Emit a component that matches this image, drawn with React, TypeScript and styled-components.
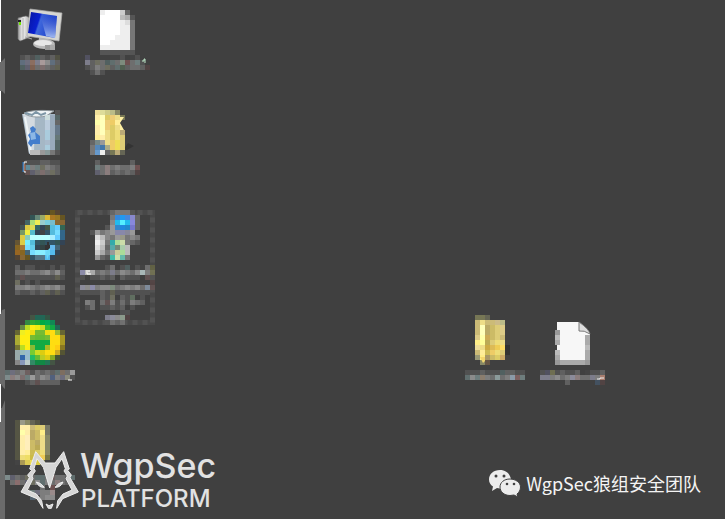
import React from "react";
import styled, { createGlobalStyle } from "styled-components";

const GlobalStyle = createGlobalStyle`
  * { box-sizing: border-box; }
  body { margin: 0; background: #404040; overflow: hidden; }
`;

const Desktop = styled.main`
  position: relative;
  min-height: 100vh;
  overflow: hidden;
  background: #404040;
`;

const IconGrid = styled.section`
  display: grid;
  grid-template-columns: repeat(8, 76px);
  grid-template-rows: repeat(4, 105px) 95px;
  padding-left: 2px;
`;

const DesktopItem = styled.div<{ $column: number; $row: number }>`
  grid-column: ${(p) => p.$column};
  grid-row: ${(p) => p.$row};
`;

const Artwork = styled.svg`
  display: block;
  width: 76px;
  height: 95px;
  overflow: visible;
`;

const WindowEdge = styled.svg`
  position: absolute;
  left: 0;
  top: 0;
  width: 6px;
  height: 519px;
`;

const Brand = styled.div`
  position: absolute;
  left: 20px;
  bottom: 8px;
  display: flex;
  align-items: center;
  color: #e2e2e2;
`;

const Wolf = styled.svg`
  width: 60px;
  height: 60px;
`;

const BrandText = styled.div`
  display: flex;
  flex-direction: column;
  gap: 4px;
  font-family: Inter, sans-serif;
  font-weight: 500;
`;

const BrandName = styled.span`
  font-size: 34px;
  line-height: 34px;
`;

const BrandKind = styled.span`
  padding-left: 1px;
  font-size: 24px;
  line-height: 24px;
`;

const Account = styled.div`
  position: absolute;
  right: 24px;
  bottom: 22px;
  display: flex;
  align-items: center;
  gap: 5px;
  color: #f4f4f4;
  font-family: "Noto Sans CJK SC", sans-serif;
  font-size: 18px;
  line-height: 28px;
  white-space: nowrap;
`;

const ChatIcon = styled.svg`
  width: 33px;
  height: 28px;
`;

const CELL = 5;

type MosaicProps = { x: number; y: number; rows: string[] };

/* Each row lists three-digit hex colours; a dot leaves the cell empty. */
function Mosaic({ x, y, rows }: MosaicProps) {
  return (
    <g shapeRendering="crispEdges">
      {rows.flatMap((row, r) =>
        row.split(" ").map((c, i) =>
          c === "." ? null : (
            <rect key={`${r}-${i}`} x={x + i * CELL} y={y + r * CELL} width={CELL} height={CELL} fill={`#${c}`} />
          )
        )
      )}
    </g>
  );
}

/* Caption mosaics sit slightly dimmed over the desktop. */
function Caption(props: MosaicProps) {
  return (
    <g opacity="0.85">
      <Mosaic {...props} />
    </g>
  );
}

type ItemProps = { column: number; row: number; children: React.ReactNode };

function Item({ column, row, children }: ItemProps) {
  const x = 2 + (column - 1) * 76;
  const y = (row - 1) * 105;
  return (
    <DesktopItem $column={column} $row={row}>
      <Artwork viewBox={`${x} ${y} 76 95`} aria-hidden="true">{children}</Artwork>
    </DesktopItem>
  );
}

function Computer() {
  return (
    <Item column={1} row={1}>
      <defs>
        <linearGradient id="screen" x1="0" x2="1" y1="0" y2="0.3">
          <stop offset="0" stopColor="#0714a0" />
          <stop offset="0.42" stopColor="#0820cf" />
          <stop offset="0.48" stopColor="#3f68dc" />
          <stop offset="1" stopColor="#1a3cc8" />
        </linearGradient>
        <linearGradient id="glare" x1="0" x2="0" y1="0" y2="1">
          <stop offset="0" stopColor="#1839c8" stopOpacity="0.3" />
          <stop offset="1" stopColor="#d4e8ff" stopOpacity="0.75" />
        </linearGradient>
        <linearGradient id="case">
          <stop offset="0" stopColor="#999" />
          <stop offset="0.4" stopColor="#f5f5f5" />
          <stop offset="1" stopColor="#aaa" />
        </linearGradient>
      </defs>
      <path d="M18 18 26 16 30 18 30 37 20 41 18 39Z" fill="url(#case)" stroke="#777" strokeWidth=".6" />
      <path d="M23 18V39M25 37l7 2" stroke="#aaa" />
      <rect x="19" y="22" width="2" height="3" fill="#70e600" />
      <path d="M18 20h3v2h-3Z" fill="#222" />
      <path d="M39 36h9l1 6H39Z" fill="#bbb" />
      <ellipse cx="44" cy="44" rx="11" ry="5" fill="#bbb" />
      <ellipse cx="43" cy="43" rx="9" ry="3" fill="#e8e8e8" />
      <path d="M30 9 62 13 59 41 27 36Z" fill="#d6d6d2" stroke="#aaa" strokeWidth=".7" />
      <path d="M31 12 57 16 55 38 28 33Z" fill="url(#screen)" />
      <path d="M40 14 57 16 55 38 46 36Z" fill="url(#glare)" />
      <Mosaic x={45} y={45} rows={["999 aaa"]} />
      <Caption x={20} y={55} rows={[
        "555 666 555 566 666 555 666 554",
        "678 778 976 889 baa 999 678 666",
        "566 667 865 777 877 777 666 665",
      ]} />
    </Item>
  );
}

function TextFile() {
  return (
    <Item column={2} row={1}>
      <Mosaic x={100} y={10} rows={[
        "eee fff fff fff ccc 666",
        "fff fff fff fff bbb aaa 555",
        "fff fff fff fff eee ddd 777",
        "fff fff fff fff eee eee 777",
        "fff fff fff fff eee eee 777",
        "fff fff fff eee eee eee 777",
        "fff fff eee eee eee eee 777",
        "eee eee eee eee eee eee 777",
        "555 555 555 555 555 555 555",
      ]} />
      <Caption x={85} y={55} rows={[
        "556 . . . . 444 444 555 . 444 555 .",
        "889 666 776 777 566 677 777 898 755 777 788 555",
        "555 666 888 777 776 666 677 565 666 777 777 666 544",
        ". 555 777 555 . . .",
      ]} />
      <path d="M142 61h2v-2h1v4" fill="none" stroke="#bee7c8" />
    </Item>
  );
}

function RecycleBin() {
  return (
    <Item column={1} row={2}>
      <path d="M22 114 60 114 55 154H29Z" fill="#a5b7c5" />
      <path d="M23 114 35 113 34 153H29Z" fill="#d3dae0" />
      <path d="M24 113c7-3 20-3 30-2l-8 5c-9 2-18 1-22-3Z" fill="#eef3f5" stroke="#8f999e" />
      <path d="m25 113 7 2 4-3 5 3 5-2" stroke="#7d96a6" strokeWidth="2" fill="none" />
      <path d="m25 117 4 21 2 15" stroke="#eef4f6" strokeWidth="2" fill="none" />
      <Mosaic x={45} y={110} rows={[
        ". . 555",
        "cdd 9ab 566",
        "bcd 9ab 666",
        "bcd 9ab 678",
        "acd 9ab 678",
        "acd 9ab 677",
        "abc 9ab 566",
        "acd 9ab 566",
        "899 777 555",
      ]} />
      <path d="m30 128 3-2 3 3-1 3 5 4v8h-7l-2 3-3-4 2-4-2-4 3-3Z" fill="#437dcc" />
      <path d="m30 133 5-1 1 7-5 1Z" fill="#8cb7e5" />
      <Mosaic x={30} y={150} rows={["bbb bbb 999"]} />
      <Caption x={25} y={160} rows={[
        "555 555 555 666 666 555 555",
        "69a 888 788 776 888 777 666",
        "655 667 777 877 777 776 666",
      ]} />
      <path d="M27 162h-3v10h2" fill="none" stroke="#fff" />
      <path d="M23 162v10" stroke="#1b72c9" />
      <path d="M25 164v7" stroke="#9c4a24" />
    </Item>
  );
}

function FolderShortcut() {
  return (
    <Item column={2} row={2}>
      <path d="m128 143 6 3-7 4h-4Z" fill="#333" />
      <Mosaic x={90} y={110} rows={[
        ". ed9 dd9 cc8 bb8 886",
        ". fea ffb dc6 ec7 ed8 775",
        ". ffa ffb ec7 ec6 fe9 .",
        ". fea ffb ec7 dc6 ed8 .",
        ". fea ffb ed8 dc6 ed7 ba7",
        ". fe9 fea ed8 dc6 ed7 dc7",
        "666 788 999 ed8 ec6 ed5 dc7",
        "777 58b 47a aa8 ec6 ed5 dc7",
        "777 68b abc dcb 775 ba7 665",
      ]} />
      <path d="M120 117h4l-4 6 4 7h-4Z" fill="#fff0a4" />
      <Mosaic x={95} y={150} rows={["69c eee 666"]} />
      <Caption x={95} y={160} rows={[
        "666 . . . . . . 666 .",
        "788 777 988 777 888 777 777 888 755",
        "667 777 988 666 777 666 777 666 544",
      ]} />
    </Item>
  );
}

function Browser() {
  return (
    <Item column={1} row={3}>
      <Mosaic x={15} y={210} rows={[
        ". . . . . . 443 652 543 .",
        ". . . 355 687 9a6 db3 a72 972 652",
        ". . 466 ad7 ee5 9cc 7cd 7bc 863 863",
        ". 455 dc4 dd5 366 345 454 5bd 6cf 365",
        ". 796 ee4 5bc 345 444 356 5bd 7df 368",
        ". dc4 8cb bff bff bff bff aef 6cf 368",
        "653 dc4 7ef 5bd 356 355 356 356 355 345",
        "862 a73 7df 6ce 345 344 333 6be 467 .",
        "962 862 467 7df 8ef 8ef 7df 5be 345 .",
        "543 863 652 356 578 578 5be 345 . .",
      ]} />
      <path d="M48 242v5" stroke="#333" strokeWidth="2" />
      <path d="m50 248-4 4 1 8 3-8Z" fill="#6cd9f5" />
      <Caption x={15} y={265} rows={[
        "666 . 555 555 . 444 . 555 . 555",
        "777 777 888 777 777 888 999 777 999 666",
        "555 655 555 555 555 555 555 555 665 555",
        "776 444 555 . 555 . . . . .",
        "888 888 999 888 777 888 999 888 999 777",
        "666 555 555 666 555 666 665 555 665 555",
      ]} />
    </Item>
  );
}

function Installer() {
  return (
    <Item column={2} row={3}>
      <rect x="77.5" y="212.5" width="75" height="110" fill="none" stroke="#484848" strokeWidth="5" />
      <rect x="77.5" y="212.5" width="75" height="110" fill="none" stroke="#525252" strokeWidth="5" strokeDasharray="5 5" />
      <Mosaic x={90} y={210} rows={[
        ". . . . 666 777 777 777 555",
        ". . . . 777 38d 29e 48d 88c 666",
        ". . . . 888 2be 5ef 2be 88d 666",
        ". . . 555 999 38c 28d 28c 77c 666",
        "555 999 777 888 999 88a 88a 889 999 .",
        ". ddd bbb 888 777 999 998 777 888 777",
        ". eee ccc 777 3aa ad9 cda 777 666 555",
        ". ddd bbb 666 5aa 787 aca bbb . .",
        ". ccc aaa 777 999 cc9 ad9 bbb . .",
        ". 999 666 555 4ba cda 6ba 777 . .",
      ]} />
      <Caption x={80} y={265} rows={[
        ". . . . . 555 777 . 555 566 . 555 444 777 664",
        "99b ccc bbb 777 888 777 889 777 999 888 777 999 bcc 888 775",
        "555 . 555 555 666 555 666 . 666 555 555 555 . 655 555",
        ". . . . . . . . . . . . . . 544",
        "99a 999 99b 888 999 999 898 777 888 999 888 999 777 89a 655",
        "555 555 555 555 666 555 665 555 555 555 555 555 555 555 .",
        ". . . . 666 555 776 . 666 555 676 . 555",
        ". 888 777 . 777 655 888 555 777 555 888 777 666",
        ". 555 777 . 555 555 666 555 666 . 555",
        ". . . . . . . . 555 555",
        ". . . . . 889 99a 999 9a9 544",
        ". . . . . 555 777 666 777 .",
      ]} />
      <path d="M86 271h4m-3 1v2h4" fill="none" stroke="#fff" />
    </Item>
  );
}

function SecurityApp() {
  return (
    <Item column={1} row={4}>
      <Mosaic x={15} y={315} rows={[
        ". . . 454 265 265 354 . . .",
        ". . 384 3a3 2a3 0a4 0a5 185 . .",
        ". 684 bd2 fe1 ee1 cd2 3b3 1a4 265 .",
        "663 ee2 fe1 ed1 7b3 7b3 ed1 fd1 9b3 663",
        "aa3 fe1 fe1 7b3 6b3 6b3 7b3 fd1 fd1 a92",
        "aa3 fe1 fe1 1a4 1a4 1a4 1a4 fd1 fd1 a92",
        "773 bd2 fe1 8b3 1a4 1a4 ab2 fd1 fc1 872",
        "9aa 9bb 9bc 7c3 cd2 dc1 fd1 fd1 ca2 553",
        "9aa 36a 9bc 2b6 6b3 bc2 dc1 8a2 453 .",
        "888 89b bcc 386 184 184 275 454 . .",
      ]} />
      <Caption x={5} y={370} rows={[
        "677 778 777 888 766 555 777 666 777 666 677 876 777 aaa",
        "899 988 999 877 788 aaa 777 999 888 568 888 778 998 555",
        ". . . . 555 666 655 666 666 666 666 . . .",
      ]} />
      <path d="M68 380h4" stroke="#fff" />
    </Item>
  );
}

function Folder() {
  return (
    <Item column={1} row={5}>
      <Mosaic x={15} y={420} rows={[
        "554 998 886 665 554 . .",
        "554 fea fea cb7 dc6 dc7 776",
        "554 ffa fea ba6 cb6 fe8 776",
        "554 fea feb ba6 cb6 ed8 886",
        "554 fea feb cb6 ba6 ed8 886",
        "554 fea feb cb6 ba5 ed8 886",
        "554 fea fe9 cb5 dc6 ed7 886",
        "554 ed7 ed6 cb4 ec5 ec5 774",
        "444 a95 dc5 ed5 dc4 774 .",
      ]} />
      <Caption x={5} y={475} rows={[
        "899 667 777 666 776 777 677 677 777 766 777 777 666 677",
        ". 777 977 777 667 776 999 677 888 777 988 777 666",
        ". . . . 555 . . 777 444 755",
        ". . . . 555 788 778 888 888 a99",
        ". . . . . 567 555 888 999 999",
      ]} />
    </Item>
  );
}

function OpenFolder() {
  return (
    <Item column={7} row={4}>
      <Mosaic x={475} y={315} rows={[
        "775 775 665 . . . .",
        "cb7 ed8 cb7 cb7 cb8 bb8 .",
        "cb7 ffb ba6 cb6 dc7 dc8 .",
        "cb7 ffb ba6 cb6 dc7 dc8 .",
        "dc8 ffa ca5 cb6 dc7 cb7 .",
        "fe8 ff9 ba5 dc7 ed7 ed8 .",
        "ed9 ed8 ca4 db5 ec5 fd6 333",
        "cb7 fe9 cb5 ec6 ed7 dc7 333",
        "997 fe8 a96 cb6 dc6 ca6 .",
        ". 886 654 . . . .",
      ]} />
      <path d="M480 357h5v4l-2 2Z" fill="#f4d76d" />
      <Caption x={465} y={370} rows={[
        "555 555 555 666 555 555 555 566 666 666 555 555",
        "677 999 788 987 888 777 9aa 777 888 9ab 866 788",
      ]} />
    </Item>
  );
}

function Document() {
  return (
    <Item column={8} row={4}>
      <path d="M557 322h22l11 11v32h-33Z" fill="#f7f7f7" />
      <path d="M579 322v9q5-1 11 3-1-5-11-12Z" fill="#ddd" stroke="#777" />
      <Mosaic x={555} y={330} rows={["999", "bbb", "aaa"]} />
      <Mosaic x={585} y={335} rows={["aaa", "aaa", "bbb"]} />
      <Mosaic x={555} y={350} rows={[
        "bbb . . . . . aaa",
        "aaa . . . . . aaa",
        "999 aaa aaa aaa aaa aaa 999",
      ]} />
      <Caption x={540} y={370} rows={[
        "555 556 775 555 666 555 555 666 . 444 555 555 666",
        "889 889 888 999 777 888 99a 988 777 777 889 888 b87",
        ". . . . . 666 . . . . . 456 544",
      ]} />
      <path d="M597 379h3v-1h4" fill="none" stroke="#eee" />
    </Item>
  );
}

export default function App() {
  return (
    <>
      <GlobalStyle />
      <Desktop>
        <IconGrid>
          <Computer />
          <TextFile />
          <RecycleBin />
          <FolderShortcut />
          <Browser />
          <Installer />
          <SecurityApp />
          <OpenFolder />
          <Document />
          <Folder />
        </IconGrid>
        <WindowEdge viewBox="0 0 6 519" aria-hidden="true">
          <path d="M0 0h1v62H0ZM0 91h1v223H0Z" fill="#fff" />
          <path d="M0 62h1l4-4v36l-3-3H0ZM0 314h1l1-4 3-1v80l-3-2v15l3-2v119H0Z" fill="#6b6b6b" />
          <path d="M0 384h1v38H0Z" fill="#fff" />
          <path d="M1 384l4 6v10l-3 8H1Z" fill="#404040" />
        </WindowEdge>
        <Brand>
          <Wolf viewBox="15 25 180 180" aria-hidden="true">
            <g fill="#d6d6d6" stroke="#eee" strokeWidth="3" strokeLinejoin="round">
              <path fillRule="evenodd" d="M62 30 91 64H120L146 30 163 82 158 86 169 100 165 108 190 151 143 171 125 200 128 177 144 157 171 145 153 111 157 103 147 88 151 81 141 51 123 77 104 139 85 77 66 51 57 81 61 88 51 103 54 111 37 145 64 157 80 177 84 200 66 171 18 151 43 108 38 100 50 86 44 82Z" />
              <path d="M64 121q12 1 24 16-17 1-24-16ZM144 121q-12 1-24 16 17 1 24-16ZM93 187l9 5 12-5-5 13h-9Z" />
            </g>
          </Wolf>
          <BrandText>
            <BrandName>WgpSec</BrandName>
            <BrandKind>PLATFORM</BrandKind>
          </BrandText>
        </Brand>
        <Account>
          <ChatIcon viewBox="0 0 33 28" aria-hidden="true">
            <path d="M12 1C5.500 1 1 5 1 10.500c0 3 1.500 5.500 4 7L4 22l5-3c11 2 14-2 14-9C22 5 18 1 12 1Z" fill="#ececec" />
            <path d="M22 10c-6 0-10 3.500-10 8s4 8.500 10 8.500l4-.5 4 2-1-3c2-1.500 3.500-4 3.500-7 0-4.500-5-8-10.500-8Z" fill="#ececec" stroke="#404040" />
            <g fill="#404040">
              <circle cx="8" cy="7" r="1.500" />
              <circle cx="16" cy="7" r="1.500" />
              <circle cx="19" cy="15" r="1.300" />
              <circle cx="26" cy="15" r="1.300" />
            </g>
          </ChatIcon>
          WgpSec狼组安全团队
        </Account>
      </Desktop>
    </>
  );
}
